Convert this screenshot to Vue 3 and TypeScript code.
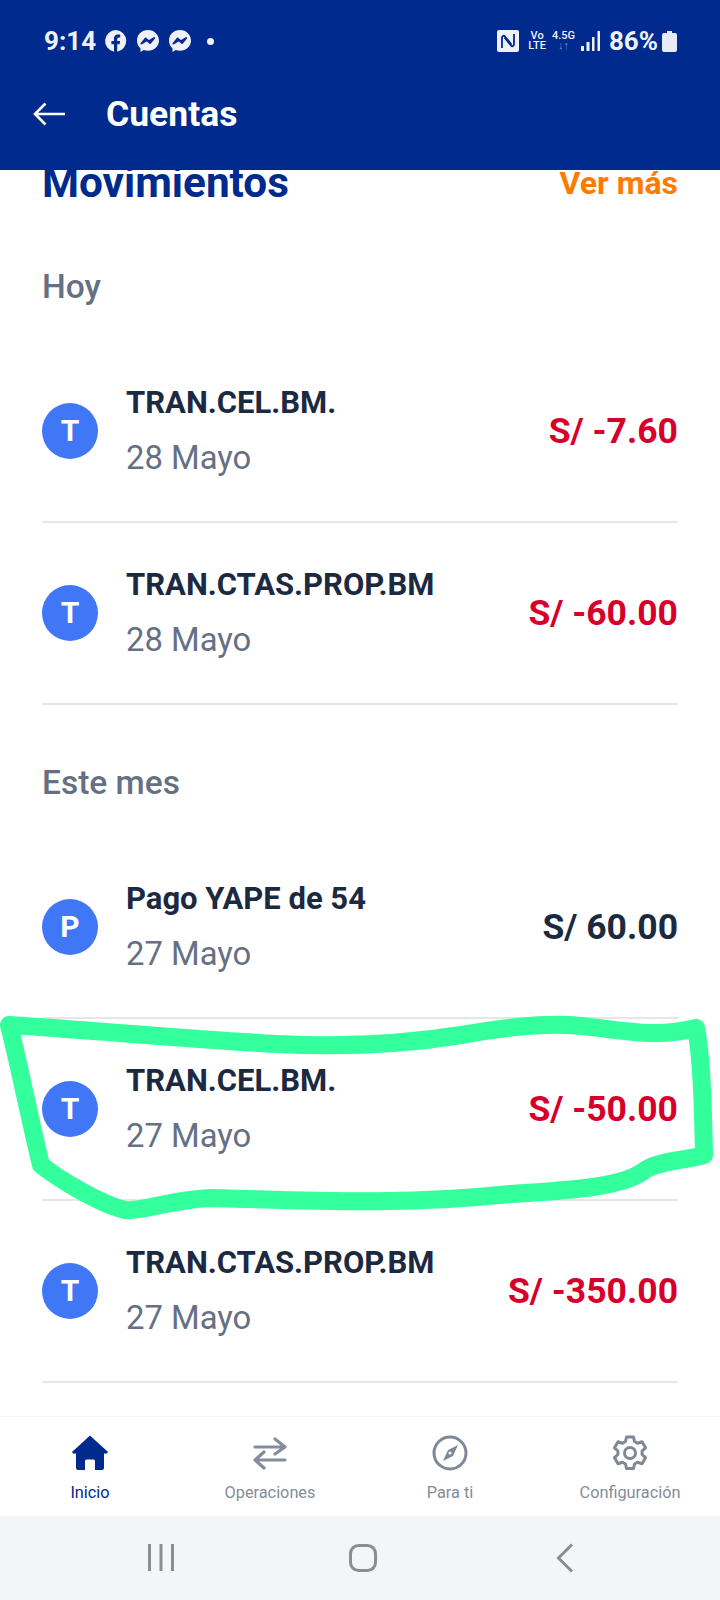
<template>
  <div class="screen">
    <header class="app-header">
      <div class="status-bar">
        <div class="status-left">
          <span class="time">9:14</span>
          <svg class="notif" viewBox="0 0 24 24" width="24" height="24">
            <path fill="#eef1f8" d="M12 1a11 11 0 0 0-2 21.800v-7.600H7.400V12H10V9.700c0-2.700 1.500-4.100 3.900-4.100 1.100 0 2.300.2 2.300.2v2.600h-1.300c-1.300 0-1.700.8-1.700 1.600V12h2.900l-.5 3.200h-2.400v7.600A11 11 0 0 0 12 1z" />
          </svg>
          <svg v-for="n in 2" :key="n" class="notif" viewBox="0 0 24 24" width="24" height="24">
            <path fill="#eef1f8" d="M12 1C5.800 1 1 5.500 1 11.600c0 3.200 1.300 5.900 3.500 7.800V23l3.300-1.900c1.300.5 2.700.7 4.200.7 6.200 0 11-4.500 11-10.200S18.200 1 12 1z" />
            <path fill="none" stroke="#002a8d" stroke-width="2" stroke-linejoin="round" d="M5.500 14.500l4-5 3.200 2.800 5.500-3.300-4 5-3.200-2.800z" />
          </svg>
          <span class="dot"></span>
        </div>
        <div class="status-right">
          <svg viewBox="0 0 22 22" width="22" height="22">
            <rect width="22" height="22" rx="2" fill="#eef1f8" />
            <path fill="none" stroke="#002a8d" stroke-width="1.800" stroke-linejoin="round" d="M5 18V8c0-2 1.500-3 3-1.500l6.500 8M17 4v10c0 2-1.500 3-3 1.500L7.500 7.500" />
          </svg>
          <span class="volte">Vo<br />LTE</span>
          <span class="net">4.5G<br /><i>↓↑</i></span>
          <svg class="signal" viewBox="0 0 19 20" width="19" height="20">
            <rect x="0" y="15" width="3" height="5" fill="#eef1f8" />
            <rect x="5.500" y="11" width="3" height="9" fill="#eef1f8" />
            <rect x="11" y="6" width="2.500" height="14" fill="#eef1f8" />
            <rect x="16.500" y="0" width="2.500" height="20" fill="#eef1f8" />
          </svg>
          <span class="battery-text">86%</span>
          <svg viewBox="0 0 15 21" width="15" height="21">
            <path fill="#e6eaf4" d="M5 0h5v2h3a2 2 0 0 1 2 2v15a2 2 0 0 1-2 2H2a2 2 0 0 1-2-2V4a2 2 0 0 1 2-2h3z" />
          </svg>
        </div>
      </div>
      <div class="title-bar">
        <svg viewBox="0 0 32 24" width="32" height="24">
          <path fill="none" stroke="#fff" stroke-width="2.600" d="M32 12H2M12.500 1.500L2 12l10.500 10.500" />
        </svg>
        <h1>Cuentas</h1>
      </div>
    </header>

    <main class="content">
      <div class="scroller">
        <div class="list-head">
          <h2>Movimientos</h2>
          <span class="more">Ver más</span>
        </div>
        <section v-for="group in groups" :key="group.label">
          <h3>{{ group.label }}</h3>
          <div v-for="row in group.rows" :key="row.name + row.amount" class="row">
            <span class="avatar">{{ row.name[0] === 'P' ? 'P' : 'T' }}</span>
            <div class="row-text">
              <div class="row-name">{{ row.name }}</div>
              <div class="row-date">{{ row.date }}</div>
            </div>
            <div class="row-amount" :class="{ minus: row.amount.includes('-') }">{{ row.amount }}</div>
          </div>
        </section>
      </div>
    </main>

    <nav class="tabs">
      <div class="tab active">
        <svg viewBox="0 0 36 36" width="36" height="36">
          <path fill="#002a8d" d="M18 0.500L36 17l-1 1.500h-3V33a2 2 0 0 1-2 2h-7v-9a1.500 1.500 0 0 0-1.500-1.500h-7A1.500 1.500 0 0 0 13 26v9H6a2 2 0 0 1-2-2V18.500H1L0 17z" />
        </svg>
        <span>Inicio</span>
      </div>
      <div class="tab">
        <svg viewBox="0 0 36 36" width="36" height="36" fill="none" stroke="#858d9b" stroke-width="3.200" stroke-linecap="round" stroke-linejoin="round">
          <path d="M3 12h30M23 4l10 8-10 7M33 25H3M12 17l-9 8 9 8" />
        </svg>
        <span>Operaciones</span>
      </div>
      <div class="tab">
        <svg viewBox="0 0 36 36" width="36" height="36">
          <circle cx="18" cy="18" r="16" fill="none" stroke="#7f8896" stroke-width="3" />
          <path fill="#7f8896" d="M26 10l-5 11-10 5 5-11zM18 16.500a1.500 1.500 0 1 0 0 3 1.500 1.500 0 0 0 0-3z" />
        </svg>
        <span>Para ti</span>
      </div>
      <div class="tab">
        <svg viewBox="0 0 36 36" width="36" height="36" fill="none" stroke="#7f8896" stroke-width="3" stroke-linejoin="round">
          <circle cx="18" cy="18" r="5.500" />
          <path d="M14.500 2h7l1 4.500 3 1.700 4.500-1.400 3.500 6-3.400 3.200v3.500l3.400 3.200-3.500 6-4.500-1.400-3 1.700-1 4.500h-7l-1-4.500-3-1.700-4.500 1.400-3.500-6 3.400-3.200V16L2.500 12.800l3.500-6 4.500 1.400 3-1.700z" />
        </svg>
        <span>Configuración</span>
      </div>
    </nav>

    <div class="system-nav">
      <svg viewBox="0 0 26 28" width="26" height="28" fill="#8b8d91">
        <rect x="0" y="0" width="3" height="27" />
        <rect x="11.500" y="0" width="3" height="27" />
        <rect x="23" y="0" width="3" height="27" />
      </svg>
      <svg viewBox="0 0 28 28" width="28" height="28" fill="none" stroke="#8b8d91" stroke-width="3">
        <rect x="1.500" y="1.500" width="25" height="25" rx="8" />
      </svg>
      <svg viewBox="0 0 18 30" width="18" height="30" fill="none" stroke="#8b8d91" stroke-width="3">
        <path d="M16 1.500L2.500 15 16 28.500" />
      </svg>
    </div>

    <svg class="marker" viewBox="0 990 720 240" width="720" height="240" fill="none">
      <path
        stroke="#33ff9c"
        stroke-width="18"
        stroke-linejoin="round"
        stroke-linecap="round"
        d="M9 1025 C90 1030 200 1040 277 1044 C340 1047 400 1045 461 1035 C500 1028 540 1024 568 1025 C610 1027 650 1040 696 1028 C702 1060 703 1110 704 1155 C690 1160 660 1160 645 1170 C625 1186 580 1190 510 1194 C400 1206 300 1200 210 1198 C170 1200 140 1212 125 1210 C100 1204 60 1180 41 1165 C30 1120 18 1060 9 1025 Z"
      />
    </svg>
  </div>
</template>

<script setup lang="ts">
interface Movement {
  name: string
  date: string
  amount: string
}

const groups: { label: string; rows: Movement[] }[] = [
  {
    label: 'Hoy',
    rows: [
      { name: 'TRAN.CEL.BM.', date: '28 Mayo', amount: 'S/ -7.60' },
      { name: 'TRAN.CTAS.PROP.BM', date: '28 Mayo', amount: 'S/ -60.00' },
    ],
  },
  {
    label: 'Este mes',
    rows: [
      { name: 'Pago YAPE de 54', date: '27 Mayo', amount: 'S/ 60.00' },
      { name: 'TRAN.CEL.BM.', date: '27 Mayo', amount: 'S/ -50.00' },
      { name: 'TRAN.CTAS.PROP.BM', date: '27 Mayo', amount: 'S/ -350.00' },
    ],
  },
]
</script>

<style>
html,
body {
  background: #fff;
}
</style>

<style scoped>
.screen {
  position: relative;
  width: 720px;
  height: 1600px;
  display: flex;
  flex-direction: column;
  overflow: hidden;
  font-family: Roboto, "Liberation Sans", sans-serif;
  background: #fff;
}

.app-header {
  height: 170px;
  flex: none;
  background: #002a8d;
  color: #fff;
  padding: 0 43px 0 33px;
  box-sizing: border-box;
  z-index: 1;
}

.status-bar {
  height: 82px;
  display: flex;
  justify-content: space-between;
  align-items: center;
  color: #eef1f8;
}

.status-left,
.status-right {
  display: flex;
  align-items: center;
}

.status-left {
  padding-left: 11px;
  gap: 8px;
}

.time {
  font-size: 26px;
  font-weight: 700;
  width: 52px;
}

.dot {
  width: 7px;
  height: 7px;
  margin-left: 7px;
  border-radius: 50%;
  background: #eef1f8;
}

.volte,
.net {
  font-size: 11px;
  line-height: 10px;
  font-weight: 500;
  text-align: center;
}

.volte {
  margin: 0 6px 0 9px;
}

.net i {
  font-style: normal;
  color: #7f93c9;
}

.net {
  margin-right: 6px;
}

.battery-text {
  font-size: 26px;
  font-weight: 700;
  margin: 0 4px 0 9px;
}

.title-bar {
  display: flex;
  align-items: center;
  height: 64px;
  gap: 41px;
}

h1 {
  margin: 0;
  font-size: 35.500px;
  font-weight: 700;
}

.content {
  flex: 1;
  min-height: 0;
  overflow: hidden;
}

.scroller {
  margin-top: -10px;
  padding: 0 42px;
}

.list-head {
  display: flex;
  justify-content: space-between;
  align-items: center;
  height: 49px;
  padding-bottom: 4px;
  box-sizing: border-box;
}

h2 {
  margin: 0;
  font-size: 42.300px;
  font-weight: 700;
  color: #002a8d;
}

.more {
  font-size: 32px;
  font-weight: 700;
  color: #ff7a00;
}

h3 {
  margin: 0;
  height: 132px;
  padding-top: 57px;
  box-sizing: border-box;
  font-size: 33.500px;
  line-height: 42px;
  font-weight: 500;
  color: #657084;
}

.row {
  height: 182px;
  box-sizing: border-box;
  display: flex;
  align-items: center;
  border-bottom: 2px solid #e5e7eb;
}

.avatar {
  width: 56px;
  height: 56px;
  flex: none;
  border-radius: 50%;
  background: #3f77f6;
  color: #fff;
  font-size: 30px;
  font-weight: 700;
  line-height: 56px;
  text-align: center;
  margin-right: 28px;
}

.row-text {
  flex: 1;
  padding-bottom: 2px;
}

.row-name {
  font-size: 31px;
  line-height: 40px;
  font-weight: 700;
  color: #1c2a41;
}

.row-date {
  margin-top: 15px;
  font-size: 32.800px;
  line-height: 40px;
  color: #667085;
}

.row-amount {
  font-size: 35.500px;
  font-weight: 700;
  color: #1c2a41;
}

.row-amount.minus {
  color: #d6002a;
}

.tabs {
  height: 100px;
  flex: none;
  display: grid;
  grid-template-columns: repeat(4, 1fr);
  background: #fff;
  border-top: 1px solid #f5f6f7;
  box-sizing: border-box;
}

.tab {
  display: flex;
  flex-direction: column;
  align-items: center;
  padding-top: 18px;
  font-size: 16.300px;
  color: #848c99;
}

.tab svg {
  margin-bottom: 12px;
}

.tab.active {
  color: #002a8d;
}

.system-nav {
  height: 84px;
  flex: none;
  background: #f4f5f7;
  display: grid;
  grid-template-columns: repeat(3, 1fr);
  align-items: center;
  justify-items: center;
  padding: 0 54px 0 60px;
  box-sizing: border-box;
}

.marker {
  position: absolute;
  left: 0;
  top: 990px;
  pointer-events: none;
}
</style>
